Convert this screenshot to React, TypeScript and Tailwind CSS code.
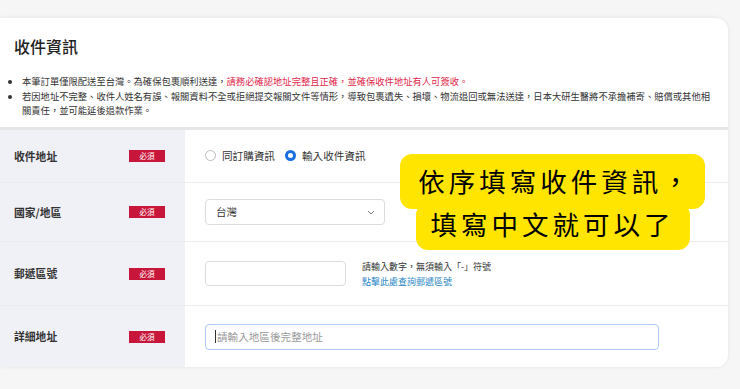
import React from 'react'

const FONT = '"Noto Sans CJK TC", "Noto Sans", "Liberation Sans", sans-serif'

function Badge() {
  return (
    <span className="flex h-[12px] w-[36px] items-center justify-center bg-[#c8163b] text-[7.5px] leading-none text-white">
      必須
    </span>
  )
}

function Row({
  label,
  height,
  last,
  children,
}: {
  label: string
  height: string
  last?: boolean
  children: React.ReactNode
}) {
  return (
    <div className={`flex ${height} ${last ? '' : 'border-b border-[#ececf0]'}`}>
      <div className="flex w-[185px] shrink-0 items-center justify-between bg-[#f0f1f6] pl-[14px] pr-[20px]">
        <span className="text-[10.8px] font-bold text-[#333]">{label}</span>
        <Badge />
      </div>
      <div className="flex flex-1 items-center pl-[20px]">{children}</div>
    </div>
  )
}

export default function App() {
  return (
    <div
      className="relative h-[389px] w-[740px] overflow-hidden bg-[#f6f6f6] pt-[18px]"
      style={{ fontFamily: FONT }}
    >
      <div className="w-[728px] overflow-hidden rounded-r-[12px] bg-white shadow-[0_0_4px_rgba(0,0,0,0.08)]">
        {/* header */}
        <div className="h-[109px] px-[14px] pt-[18px]">
          <h2 className="text-[16px] font-medium leading-[20px] text-[#222]">收件資訊</h2>
          <ul className="mt-[18px] w-[700px] list-disc pl-[8px] text-[9.3px] leading-[14.5px] text-[#333]">
            <li>
              本筆訂單僅限配送至台灣。為確保包裹順利送達，
              <span className="text-[#e0284a]">請務必確認地址完整且正確，並確保收件地址有人可簽收。</span>
            </li>
            <li>
              若因地址不完整、收件人姓名有誤、報關資料不全或拒絕提交報關文件等情形，導致包裹遺失、損壞、物流退回或無法送達，日本大研生醫將不承擔補寄、賠償或其他相關責任，並可能延後退款作業。
            </li>
          </ul>
        </div>

        <div className="border-t-[3px] border-[#e6e6e8]">
          <Row label="收件地址" height="h-[53px]">
            <label className="flex items-center gap-[6px] text-[10.6px] text-[#333]">
              <span className="h-[11px] w-[11px] rounded-full border border-[#bdbdbd] bg-white" />
              同訂購資訊
            </label>
            <label className="ml-[10px] flex items-center gap-[6px] text-[10.6px] text-[#333]">
              <span className="h-[11px] w-[11px] rounded-full border-[3.5px] border-[#1a6fe0] bg-white" />
              輸入收件資訊
            </label>
          </Row>

          <Row label="國家/地區" height="h-[59px]">
            <div className="flex h-[26px] w-[180px] items-center justify-between rounded-[4px] border border-[#dcdcdc] pl-[10px] pr-[9px] text-[10.6px] text-[#333]">
              台灣
              <svg width="8" height="5" viewBox="0 0 8 5" fill="none">
                <path d="M1 1l3 3 3-3" stroke="#777" strokeWidth="1" />
              </svg>
            </div>
          </Row>

          <Row label="郵遞區號" height="h-[64px]">
            <div className="h-[25px] w-[141px] rounded-[4px] border border-[#dcdcdc]" />
            <div className="ml-[16px] text-[9px] leading-[15px]">
              <p className="text-[#333]">請輸入數字，無須輸入「-」符號</p>
              <p className="text-[#1f86c4]">點擊此處查詢郵遞區號</p>
            </div>
          </Row>

          <Row label="詳細地址" height="h-[61px]" last>
            <div className="flex h-[26px] w-[454px] items-center rounded-[4px] border border-[#b0cbf2] pl-[9px] text-[10.6px] text-[#9a9a9a]">
              <span className="mr-[1px] h-[13px] w-px bg-[#333]" />
              請輸入地區後完整地址
            </div>
          </Row>
        </div>
      </div>

      {/* annotation bubble */}
      <div className="absolute left-[400px] top-[154px] flex w-[305px] flex-col items-center text-[26.5px] font-normal leading-none text-black">
        <div className="flex h-[55px] w-[305px] items-center justify-center rounded-[12px] bg-[#ffe500] pl-[6px] tracking-[4px]">
          依序填寫收件資訊，
        </div>
        <div className="-mt-[6px] flex h-[47px] w-[274px] items-center justify-center rounded-[12px] bg-[#ffe500] pb-[4px] tracking-[4px]">
          填寫中文就可以了
        </div>
      </div>
    </div>
  )
}
